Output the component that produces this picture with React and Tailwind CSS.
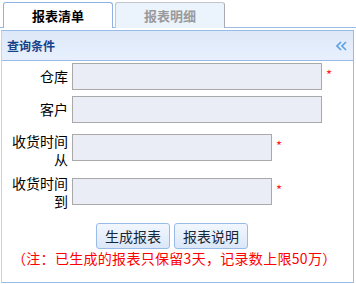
const FONT = { fontFamily: '"Noto Sans CJK SC", "Noto Sans", sans-serif' };

const Star = ({ className = '' }) => (
  <span className={`text-[#ff1a1a] text-[13px] leading-none ml-[4px] mt-[5px] ${className}`}>*</span>
);

const Input = ({ w }) => (
  <div className={`h-[27px] ${w} bg-[#eaedf6] border border-[#a9a9a9] shrink-0`} />
);

export default function App() {
  return (
    <div className="w-[356px] h-[284px] bg-white overflow-hidden" style={FONT}>
      {/* tab strip */}
      <div className="h-[28px] pt-[2px] pl-[3px] flex gap-[2px] border-b border-[#99bbe8]">
        <div className="w-[110px] h-[26px] bg-white border border-b-0 border-[#8db2e3] rounded-t-[3px] flex items-center justify-center text-[13px] font-bold text-black">
          报表清单
        </div>
        <div className="w-[110px] h-[26px] bg-[#ebf3fd] border border-b-0 border-[#c3c7cc] border-r-[#a8abb0] rounded-t-[3px] flex items-center justify-center text-[13px] font-bold text-[#9a9a9a]">
          报表明细
        </div>
      </div>

      {/* panel */}
      <div className="mt-[2px] ml-[1px] w-[353px] h-[253px] border border-[#99bbe8] border-l-[#c6d4e8] flex flex-col">
        <div className="h-[30px] shrink-0 flex items-center justify-between pl-[5px] pr-[6px] bg-gradient-to-b from-[#dde8f8] to-[#e8f0fd] border-b border-[#99bbe8]">
          <span className="text-[12px] font-bold text-[#15428b]">查询条件</span>
          <svg width="11" height="10" viewBox="0 0 11 10" fill="none" stroke="#5a9ee3" strokeWidth="1.6">
            <path d="M5 1 L1 5 L5 9" />
            <path d="M10 1 L6 5 L10 9" />
          </svg>
        </div>

        <div className="flex flex-col text-[14px] text-black">
          <div className="flex items-start mt-[2px]">
            <div className="w-[66px] text-right leading-[27px] mr-[4px]">仓库</div>
            <Input w="w-[250px]" />
            <Star />
          </div>

          <div className="flex items-start mt-[6px]">
            <div className="w-[66px] text-right leading-[27px] mr-[4px]">客户</div>
            <Input w="w-[250px]" />
          </div>

          <div className="flex items-start mt-[9px]">
            <div className="w-[66px] text-right leading-[18px] mr-[4px]">收货时间<br />从</div>
            <div className="mt-[2px] flex items-start">
              <Input w="w-[200px]" />
              <Star />
            </div>
          </div>

          <div className="flex items-start mt-[6px]">
            <div className="w-[66px] text-right leading-[18px] mr-[4px]">收货时间<br />到</div>
            <div className="mt-[4px] flex items-start">
              <Input w="w-[200px]" />
              <Star />
            </div>
          </div>

          <div className="flex gap-[4px] pl-[94px] mt-[13px]">
            <button className="w-[74px] h-[26px] rounded-[3px] border border-[#99bbe8] bg-gradient-to-b from-[#f2f7fe] to-[#dbe7f8] text-[14px] text-[#15283b] leading-none">
              生成报表
            </button>
            <button className="w-[74px] h-[26px] rounded-[3px] border border-[#99bbe8] bg-gradient-to-b from-[#f2f7fe] to-[#dbe7f8] text-[14px] text-[#15283b] leading-none">
              报表说明
            </button>
          </div>

          <div className="pl-[10px] leading-[18px] text-[14px] text-[#ff0000] whitespace-nowrap tracking-[0.3px]">
            （注：已生成的报表只保留3天，记录数上限50万）
          </div>
        </div>
      </div>
    </div>
  );
}
